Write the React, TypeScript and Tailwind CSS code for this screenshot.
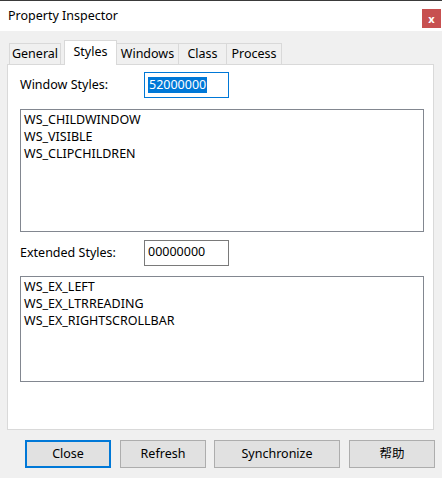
import React from "react";

const font = { fontFamily: '"Noto Sans", "Noto Sans CJK SC", sans-serif' };

function Tab({ label, w, selected, first, extra }: { label: string; w: string; selected?: boolean; first?: boolean; extra?: string }) {
  if (selected) {
    return (
      <div className={`relative z-10 ${w} ${extra ?? ""} h-[25px] -mb-px bg-white border-l border-t border-r border-[#d9d9d9] flex items-start justify-center pt-[2px] text-[12.5px] text-black`}>
        {label}
      </div>
    );
  }
  return (
    <div className={`${w} ${extra ?? ""} h-[21px] bg-[#f0f0f0] border-t border-r ${first ? "border-l" : ""} border-[#d9d9d9] flex items-center justify-center text-[12.5px] text-black`}>
      {label}
    </div>
  );
}

function Btn({ label, w, def }: { label: string; w: string; def?: boolean }) {
  return (
    <div
      className={`${w} h-[28px] bg-[#e1e1e1] flex items-center justify-center text-[12.5px] text-black ${def ? "border-2 border-[#0078d7]" : "border border-[#adadad]"}`}
    >
      {label}
    </div>
  );
}

export default function App() {
  return (
    <div style={font} className="w-[442px] h-[478px] bg-[#f0f0f0] flex flex-col overflow-hidden">
      {/* title bar */}
      <div className="h-[31px] bg-white border-t border-[#3a3a3a] flex items-center justify-between">
        <span className="ml-[8px] text-[12.5px] text-black leading-none">Property Inspector</span>
        <div className="mr-[1px] mt-[4px] w-[19px] h-[19px] bg-[#c75050] flex items-center justify-center text-white text-[11px] font-bold leading-none">
          x
        </div>
      </div>
      {/* tabs */}
      <div className="h-[33px] flex items-end pl-[9px]">
        <Tab label="General" w="w-[52px]" first />
        <Tab label="Styles" w="w-[53px]" extra="ml-[3px]" selected />
        <Tab label="Windows" w="w-[62px]" />
        <Tab label="Class" w="w-[48px]" />
        <Tab label="Process" w="w-[55px]" />
      </div>
      {/* panel */}
      <div className="ml-[7px] w-[427px] h-[366px] bg-white border border-[#d9d9d9] flex flex-col pl-[12px] pt-[7px]">
        <div className="flex items-center h-[26px]">
          <span className="w-[124px] text-[12.5px] text-black">Window Styles:</span>
          <div className="w-[85px] h-[26px] border border-[#0078d7] flex items-center pl-[3px]">
            <span className="bg-[#0078d7] text-white text-[12.5px] leading-[16px] px-px">52000000</span>
          </div>
        </div>
        <div className="mt-[11px] w-[404px] h-[123px] border border-[#828790] pl-[3px] pt-[1px] text-[12.5px] text-black leading-[17px]">
          <div>WS_CHILDWINDOW</div>
          <div>WS_VISIBLE</div>
          <div>WS_CLIPCHILDREN</div>
        </div>
        <div className="mt-[8px] flex items-center h-[26px]">
          <span className="w-[124px] text-[12.5px] text-black">Extended Styles:</span>
          <div className="w-[85px] h-[26px] border border-[#7a7a7a] flex items-start pl-[3px] pt-[2px] text-[12.5px] text-black">
            00000000
          </div>
        </div>
        <div className="mt-[10px] w-[404px] h-[106px] border border-[#828790] pl-[3px] pt-[1px] text-[12.5px] text-black leading-[17px]">
          <div>WS_EX_LEFT</div>
          <div>WS_EX_LTRREADING</div>
          <div>WS_EX_RIGHTSCROLLBAR</div>
        </div>
      </div>
      {/* buttons */}
      <div className="mt-[10px] flex pl-[25px] gap-[9px]">
        <Btn label="Close" w="w-[86px]" def />
        <Btn label="Refresh" w="w-[86px]" />
        <div className="-ml-px">
          <Btn label="Synchronize" w="w-[126px]" />
        </div>
        <Btn label="帮助" w="w-[86px]" />
      </div>
    </div>
  );
}
